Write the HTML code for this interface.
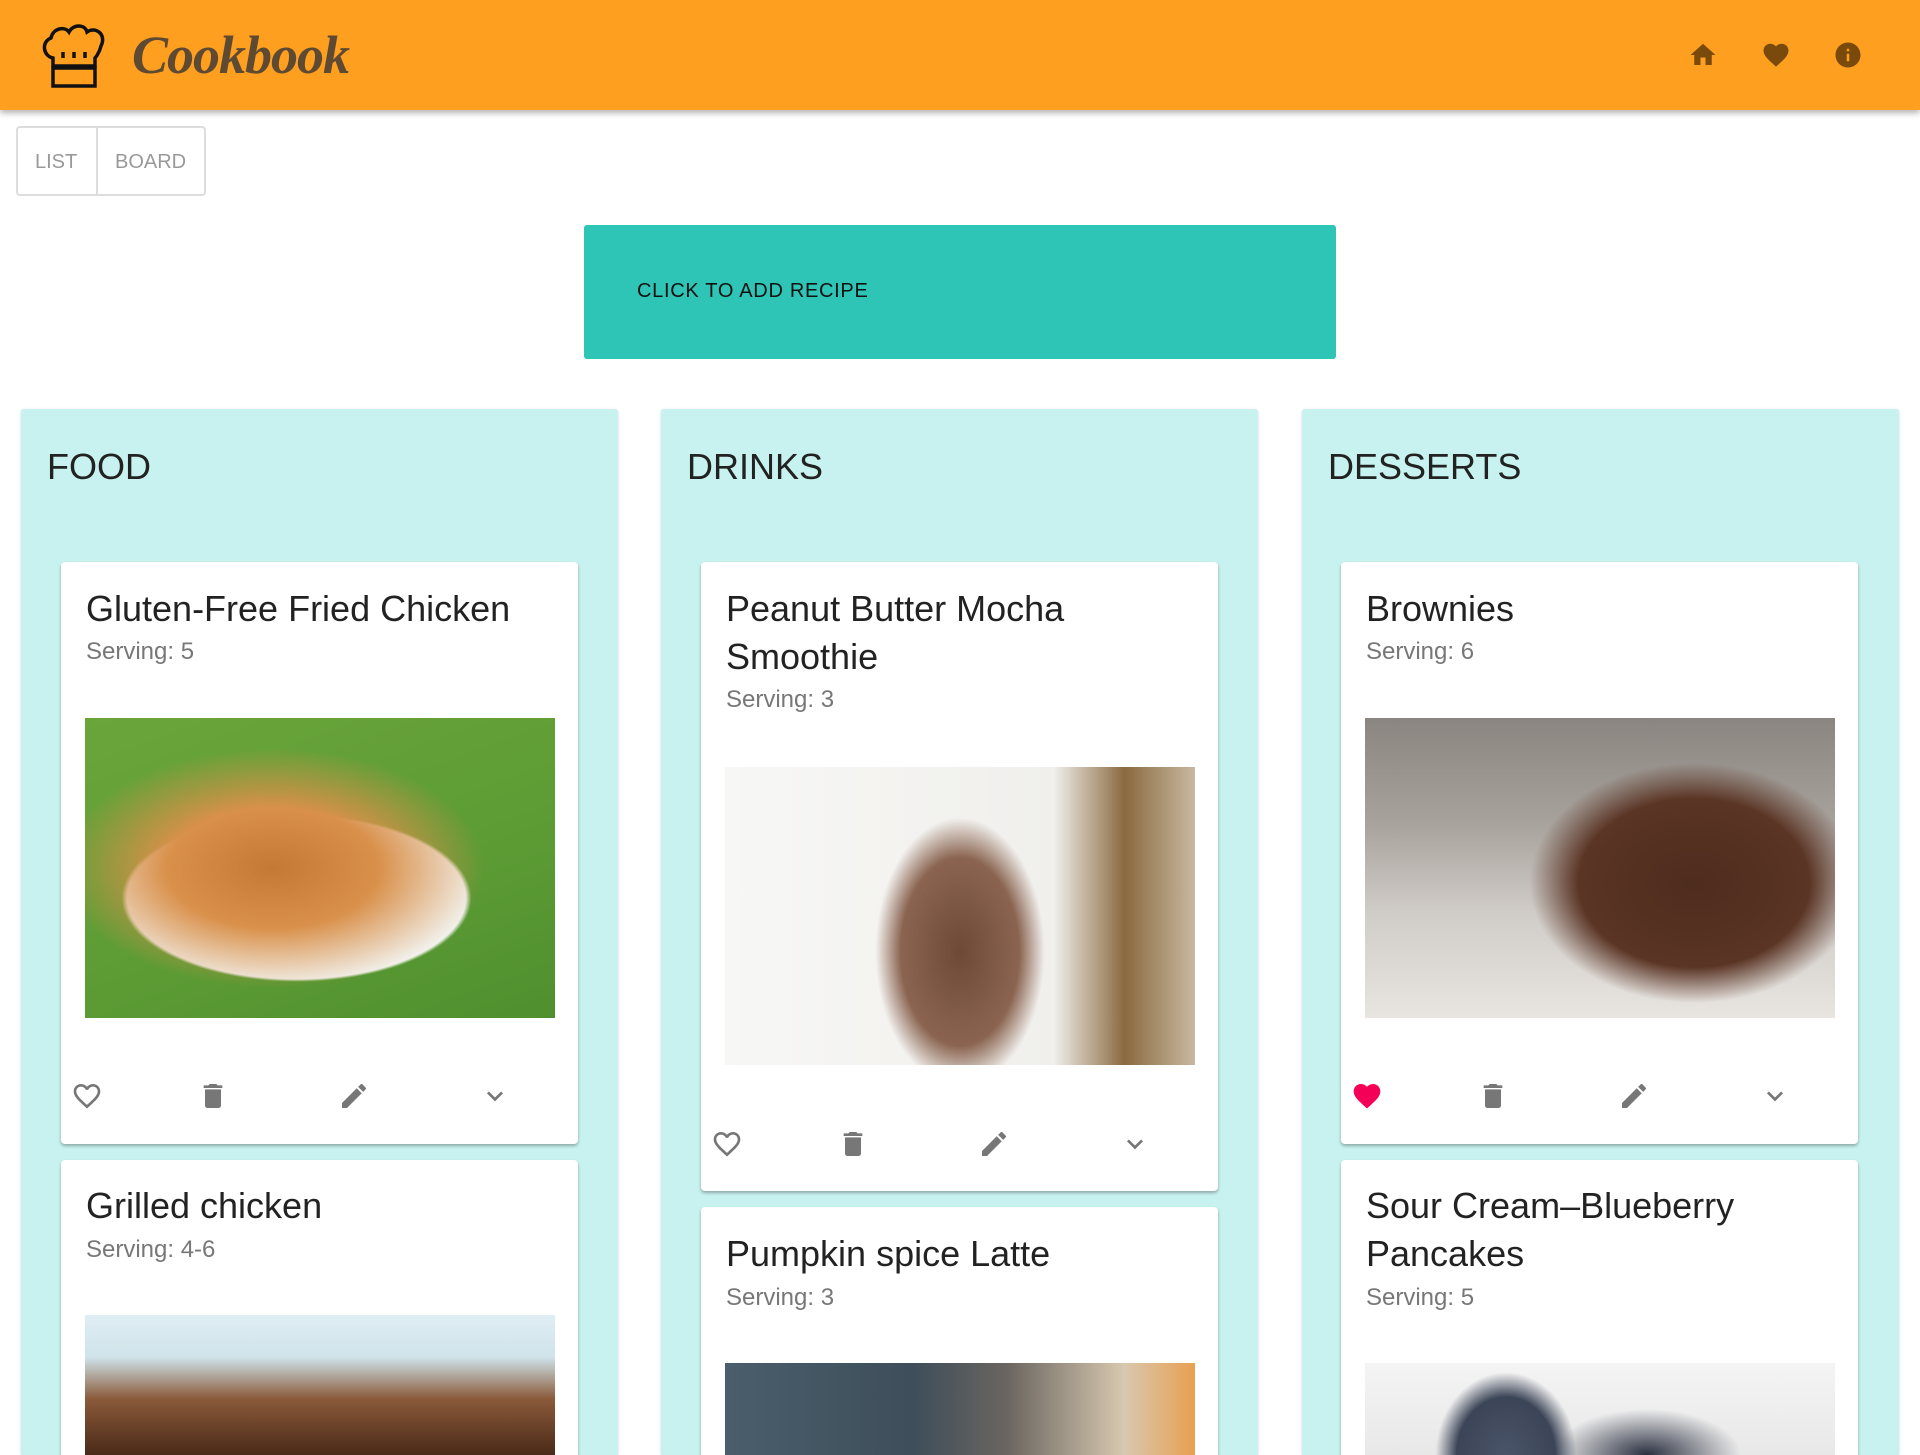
<!DOCTYPE html>
<html style="width:1920px;height:1455px;overflow:hidden"><head><meta charset="utf-8"><style>
*{margin:0;padding:0;box-sizing:border-box}
body{width:1920px;height:1455px;overflow:hidden;background:#fff;font-family:"Liberation Sans",sans-serif;position:relative}
.hdr{position:absolute;left:0;top:0;width:1920px;height:110px;background:#ff9f1f;box-shadow:0 3px 6px rgba(0,0,0,.3);z-index:2}
.logo{position:absolute;left:132px;top:24px;font-family:"Liberation Serif",serif;font-style:italic;font-weight:bold;font-size:54px;color:#5e4a33;letter-spacing:-1px}
.tog{position:absolute;left:16px;top:126px;width:190px;height:70px;border:2px solid #ddd;border-radius:4px;color:#999;font-size:20px}
.tog span{position:absolute;top:23px}
.add{position:absolute;left:584px;top:225px;width:752px;height:134px;background:#2ec4b6;border-radius:3px;color:#111;font-size:20px;letter-spacing:.7px}
.add span{position:absolute;left:53px;top:55px}
.col{position:absolute;top:409px;width:597px;height:1046px;background:#c8f2ef;border-radius:3px 3px 0 0;box-shadow:0 1px 3px rgba(0,0,0,.15);overflow:hidden}
.card{position:absolute;width:517px;background:#fff;border-radius:4px;box-shadow:0 2px 3px rgba(0,0,0,.3);overflow:hidden}
.t{position:absolute;left:25px;font-size:36px;color:#222;line-height:48px;white-space:nowrap}
.s{position:absolute;left:25px;font-size:24px;color:#777}
.img{position:absolute;left:24px;width:470px}
.ic{position:absolute;width:32px;height:32px}
</style></head><body>
<div class="hdr">
<svg style="position:absolute;left:39px;top:22px" width="70" height="68" viewBox="0 0 70 68" fill="none" stroke="#111" stroke-width="3.5"><path d="M14 44 V36 C4 34 2 20 12 16 C14 6 26 4 30 10 C34 2 46 2 48 10 C56 4 68 12 62 24 C60 32 56 36 56 36 V44 Z"/><rect x="14" y="46" width="42" height="18"/><path d="M24 30v6M35 30v6M46 30v6"/></svg>
<div class="logo">Cookbook</div>
<svg style="position:absolute;left:1688px;top:40px" width="30" height="30" viewBox="0 0 24 24" fill="#7a4a0c"><path d="M10 20v-6h4v6h5v-8h3L12 3 2 12h3v8z"/></svg>
<svg style="position:absolute;left:1761px;top:40px" width="30" height="30" viewBox="0 0 24 24" fill="#7a4a0c"><path d="M12 21.35l-1.45-1.32C5.4 15.36 2 12.28 2 8.5 2 5.42 4.42 3 7.5 3c1.74 0 3.41.81 4.5 2.09C13.09 3.81 14.76 3 16.5 3 19.58 3 22 5.42 22 8.5c0 3.78-3.4 6.86-8.55 11.54z"/></svg>
<svg style="position:absolute;left:1833px;top:40px" width="30" height="30" viewBox="0 0 24 24" fill="#7a4a0c"><path d="M12 2C6.48 2 2 6.48 2 12s4.48 10 10 10 10-4.48 10-10S17.52 2 12 2zm1 15h-2v-6h2v6zm0-8h-2V7h2v2z"/></svg>
</div>
<div class="tog"><span style="left:17px">LIST</span><div style="position:absolute;left:78px;top:0;width:2px;height:66px;background:#ddd"></div><span style="left:97px">BOARD</span></div>
<div class="add"><span>CLICK TO ADD RECIPE</span></div>

<svg width="0" height="0" style="position:absolute"><defs>
<symbol id="ho" viewBox="0 0 24 24"><path fill="#777" d="M16.5 3c-1.74 0-3.41.81-4.5 2.09C10.91 3.81 9.24 3 7.5 3 4.42 3 2 5.42 2 8.5c0 3.78 3.4 6.86 8.55 11.54L12 21.35l1.45-1.32C18.6 15.36 22 12.28 22 8.5 22 5.42 19.58 3 16.5 3zm-4.4 15.55l-.1.1-.1-.1C7.14 14.24 4 11.39 4 8.5 4 6.5 5.5 5 7.5 5c1.54 0 3.04.99 3.57 2.36h1.87C13.46 5.99 14.960 5 16.5 5c2 0 3.5 1.5 3.5 3.5 0 2.89-3.14 5.74-7.9 10.05z"/></symbol>
<symbol id="hf" viewBox="0 0 24 24"><path fill="#f50057" d="M12 21.35l-1.45-1.32C5.4 15.36 2 12.28 2 8.5 2 5.42 4.42 3 7.5 3c1.74 0 3.41.81 4.5 2.09C13.09 3.81 14.76 3 16.5 3 19.58 3 22 5.42 22 8.5c0 3.78-3.4 6.86-8.55 11.54z"/></symbol>
<symbol id="tr" viewBox="0 0 24 24"><path fill="#777" d="M6 19c0 1.1.9 2 2 2h8c1.1 0 2-.9 2-2V7H6v12zM19 4h-3.5l-1-1h-5l-1 1H5v2h14V4z"/></symbol>
<symbol id="ed" viewBox="0 0 24 24"><path fill="#777" d="M3 17.25V21h3.75L17.81 9.94l-3.75-3.75L3 17.25zM20.71 7.04a1 1 0 0 0 0-1.41l-2.34-2.34a1 1 0 0 0-1.41 0l-1.83 1.83 3.75 3.75 1.83-1.83z"/></symbol>
<symbol id="ex" viewBox="0 0 24 24"><path fill="#777" d="M16.59 8.59L12 13.17 7.41 8.59 6 10l6 6 6-6z"/></symbol>
</defs></svg>

<div class="col" style="left:21px"></div>
<div style="position:absolute;left:47px;top:446px;font-size:36px;color:#222">FOOD</div>
<div class="card" style="left:61px;top:562px;height:582px">
<div class="t" style="top:23px">Gluten-Free Fried Chicken</div>
<div class="s" style="top:76px">Serving: 5</div>
<div class="img" style="top:156px;height:300px;background:radial-gradient(ellipse 45% 40% at 40% 50%,#c47a34 0,#d9904a 50%,rgba(0,0,0,0) 100%),radial-gradient(ellipse 60% 45% at 45% 60%,#f2f2ee 60%,rgba(0,0,0,0) 62%),linear-gradient(160deg,#6aa53a,#5c9b34 60%,#4f8f2e)"></div>
<svg class="ic" style="left:10px;top:518px"><use href="#ho"/></svg>
<svg class="ic" style="left:136px;top:518px"><use href="#tr"/></svg>
<svg class="ic" style="left:277px;top:518px"><use href="#ed"/></svg>
<svg class="ic" style="left:418px;top:518px"><use href="#ex"/></svg>
</div>
<div class="card" style="left:61px;top:1160px;height:295px;border-radius:4px 4px 0 0">
<div class="t" style="top:22px">Grilled chicken</div>
<div class="s" style="top:76px">Serving: 4-6</div>
<div class="img" style="top:155px;height:140px;background:linear-gradient(180deg,#dfeef3 0,#cfe3ea 30%,#8a5a3a 60%,#4a2a18 100%)"></div>
</div>

<div class="col" style="left:661px"></div>
<div style="position:absolute;left:687px;top:446px;font-size:36px;color:#222">DRINKS</div>
<div class="card" style="left:701px;top:562px;height:629px">
<div class="t" style="top:23px">Peanut Butter Mocha<br>Smoothie</div>
<div class="s" style="top:124px">Serving: 3</div>
<div class="img" style="top:205px;height:298px;background:radial-gradient(ellipse 18% 45% at 50% 62%,#6e4a36 0,#8a6450 70%,rgba(0,0,0,0) 100%),linear-gradient(90deg,#f7f7f5 0,#f0efec 70%,#8a6a40 85%,#c8b8a0 100%)"></div>
<svg class="ic" style="left:10px;top:566px"><use href="#ho"/></svg>
<svg class="ic" style="left:136px;top:566px"><use href="#tr"/></svg>
<svg class="ic" style="left:277px;top:566px"><use href="#ed"/></svg>
<svg class="ic" style="left:418px;top:566px"><use href="#ex"/></svg>
</div>
<div class="card" style="left:701px;top:1207px;height:248px;border-radius:4px 4px 0 0">
<div class="t" style="top:23px">Pumpkin spice Latte</div>
<div class="s" style="top:77px">Serving: 3</div>
<div class="img" style="top:156px;height:92px;background:linear-gradient(90deg,#4a5e6c 0,#3e4e5a 40%,#6a6560 60%,#d8c8b0 85%,#e8a050 100%)"></div>
</div>

<div class="col" style="left:1302px"></div>
<div style="position:absolute;left:1328px;top:446px;font-size:36px;color:#222">DESSERTS</div>
<div class="card" style="left:1341px;top:562px;height:582px">
<div class="t" style="top:23px">Brownies</div>
<div class="s" style="top:76px">Serving: 6</div>
<div class="img" style="top:156px;height:300px;background:radial-gradient(ellipse 35% 40% at 70% 55%,#4e2c1e 0,#5a3424 70%,rgba(0,0,0,0) 100%),linear-gradient(180deg,#8a8580 0,#a8a29c 35%,#d0ccc8 65%,#e8e4e0 100%)"></div>
<svg class="ic" style="left:10px;top:518px"><use href="#hf"/></svg>
<svg class="ic" style="left:136px;top:518px"><use href="#tr"/></svg>
<svg class="ic" style="left:277px;top:518px"><use href="#ed"/></svg>
<svg class="ic" style="left:418px;top:518px"><use href="#ex"/></svg>
</div>
<div class="card" style="left:1341px;top:1160px;height:295px;border-radius:4px 4px 0 0">
<div class="t" style="top:22px">Sour Cream–Blueberry<br>Pancakes</div>
<div class="s" style="top:124px">Serving: 5</div>
<div class="img" style="top:203px;height:92px;background:radial-gradient(ellipse 15% 90% at 30% 100%,#4a5468 0,#3c4558 70%,rgba(0,0,0,0) 100%),radial-gradient(ellipse 20% 50% at 60% 100%,#2a3040 0,rgba(0,0,0,0) 100%),linear-gradient(180deg,#f4f4f4,#e8e8e8)"></div>
</div>
</body></html>
